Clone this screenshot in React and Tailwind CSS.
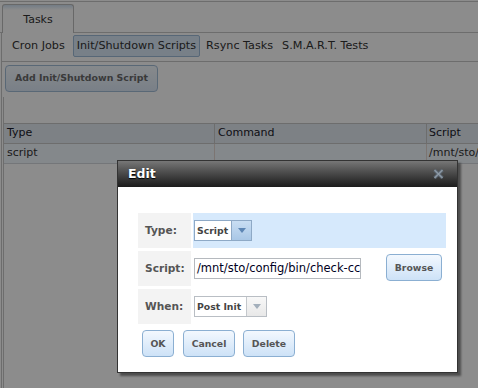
import React from 'react';

const Arrow = ({ color }) => (
  <svg width="8" height="5" viewBox="0 0 8 5">
    <path d="M0 0 L8 0 L4 5 Z" fill={color} />
  </svg>
);

const DlgButton = ({ label, className }) => (
  <button
    className={`h-[27px] rounded-[4px] border border-[#8bafd2] bg-gradient-to-b from-[#f3f8fe] to-[#cde2f7] text-[9.3px] font-bold text-[#555] ${className}`}
  >
    {label}
  </button>
);

const App = () => {
  return (
    <div className="relative w-[478px] h-[388px] overflow-hidden bg-white font-['DejaVu_Sans',Verdana,sans-serif] text-[#333]">
      {/* page behind the dialog */}
      <div className="mt-[1px] h-full border-t border-[#c6c6c6]">
        {/* main tab strip */}
        <div className="flex h-[31px] items-end border-b border-[#c6c6c6] pl-[2px]">
          <div className="-mb-px flex h-[29px] w-[72px] items-center justify-center rounded-t-[3px] border border-b-0 border-[#bdbdbd] bg-[linear-gradient(#d2e3f4,#ffffff_5px)] pt-[3px] text-[11px]">
            Tasks
          </div>
        </div>

        <div className="ml-[1px] h-full border-l border-[#c6c6c6]">
          {/* sub tabs */}
          <div className="flex h-[29px] items-start border-b border-[#c6c6c6] pl-[5px] pt-[2px] text-[11.2px]">
            <span className="flex h-[22px] items-center border border-transparent px-[4px]">Cron Jobs</span>
            <span className="ml-[3px] flex h-[22px] items-center rounded-[2px] border border-[#9fbcd9] bg-[#dae9f8] px-[3px]">
              Init/Shutdown Scripts
            </span>
            <span className="ml-[1px] flex h-[22px] items-center border border-transparent px-[4px]">Rsync Tasks</span>
            <span className="flex h-[22px] items-center border border-transparent px-[3px]">S.M.A.R.T. Tests</span>
          </div>

          <div className="pl-[3px] pt-[2px]">
            <button className="h-[27px] w-[153px] rounded-[4px] border border-[#a3bdd8] bg-gradient-to-b from-[#f5faff] to-[#dde9f6] text-[9.4px] font-bold text-[#6a6a6a]">
              Add Init/Shutdown Script
            </button>
          </div>

          {/* grid */}
          <div className="ml-[1px] mt-[5px] h-full border-l border-[#c6c6c6] pt-[26px] text-[11px]">
            <div className="grid h-[21px] grid-cols-[211px_212px_1fr] border-y border-[#c6c6c6] bg-[#e4ebf2] text-[#1a1a2a]">
              <div className="flex items-center border-r border-[#c6c6c6] pl-[3px]">Type</div>
              <div className="flex items-center border-r border-[#c6c6c6] pl-[3px]">Command</div>
              <div className="flex items-center pl-[2px]">Script</div>
            </div>
            <div className="grid h-[20px] grid-cols-[211px_212px_1fr] overflow-hidden whitespace-nowrap border-b border-[#d4d8dc] bg-[#f1f7fd]">
              <div className="flex items-center border-r border-[#e2d6cf] pl-[3px]">script</div>
              <div className="border-r border-[#e2d6cf]"></div>
              <div className="flex items-center overflow-hidden pl-[2px]">/mnt/sto/config/bin/check-config</div>
            </div>
          </div>
        </div>
      </div>

      {/* modal underlay */}
      <div className="absolute inset-0 bg-black/45"></div>

      {/* Edit dialog */}
      <div className="absolute left-[117px] top-[160px] h-[213px] w-[341px] border border-[#333] bg-white shadow-[3px_3px_2px_rgba(0,0,0,0.45)]">
        <div className="flex h-[26px] items-center justify-between bg-gradient-to-b from-[#777] to-[#1c1c1c] pl-[10px] pr-[13px]">
          <span className="text-[12.5px] font-bold text-white [text-shadow:0_1px_1px_#000]">Edit</span>
          <svg width="11" height="10" viewBox="0 0 11 10">
            <path d="M1.5 1 L9.5 9 M9.5 1 L1.5 9" stroke="#5d6873" strokeWidth="3.2" />
            <path d="M1.5 1 L9.5 9 M9.5 1 L1.5 9" stroke="#8f9ba7" strokeWidth="1.2" />
          </svg>
        </div>

        <div className="pl-[20px] pt-[26px]">
          <div className="grid w-[308px] grid-cols-[53px_253px] gap-x-[2px] gap-y-[3px]">
            <div className="flex h-[35px] items-center bg-[#f3f3f3] pl-[7px] text-[10.6px] font-bold text-[#555]">Type:</div>
            <div className="flex h-[35px] items-center bg-[#d6e9fc] pl-[1px]">
              <div className="flex h-[21px] border border-[#8ea9c6] bg-white">
                <span className="flex w-[36px] items-center pl-[2px] text-[9.3px] font-bold text-[#444]">Script</span>
                <span className="flex w-[20px] items-center justify-center border-l border-[#8ea9c6] bg-gradient-to-b from-[#c9def3] to-[#a9c7e6]">
                  <Arrow color="#5d86b4" />
                </span>
              </div>
            </div>

            <div className="flex h-[35px] items-center bg-[#f3f3f3] pl-[7px] text-[10.6px] font-bold text-[#555]">Script:</div>
            <div className="flex h-[35px] items-center pl-[1px]">
              <div className="flex h-[21px] w-[167px] items-center overflow-hidden whitespace-nowrap border border-[#b5b9be] bg-white pl-[2px] text-[11.5px] text-[#000022]">
                /mnt/sto/config/bin/check-cc
              </div>
              <DlgButton label="Browse" className="ml-[25px] -mt-[2px] w-[56px]" />
            </div>

            <div className="flex h-[35px] items-center bg-[#f3f3f3] pl-[7px] text-[10.6px] font-bold text-[#555]">When:</div>
            <div className="flex h-[35px] items-center pl-[1px]">
              <div className="flex h-[21px] border border-[#b9bec4] bg-white">
                <span className="flex w-[51px] items-center pl-[2px] text-[9.3px] font-bold text-[#444]">Post Init</span>
                <span className="flex w-[20px] items-center justify-center border-l border-[#c4c8cc] bg-gradient-to-b from-[#f8f8f8] to-[#e8e8e8]">
                  <Arrow color="#a3afbb" />
                </span>
              </div>
            </div>
          </div>

          <div className="mt-[6px] flex pl-[4px]">
            <DlgButton label="OK" className="w-[32px]" />
            <DlgButton label="Cancel" className="ml-[9px] w-[52px]" />
            <DlgButton label="Delete" className="ml-[8px] w-[52px]" />
          </div>
        </div>
      </div>
    </div>
  );
};

export default App;
